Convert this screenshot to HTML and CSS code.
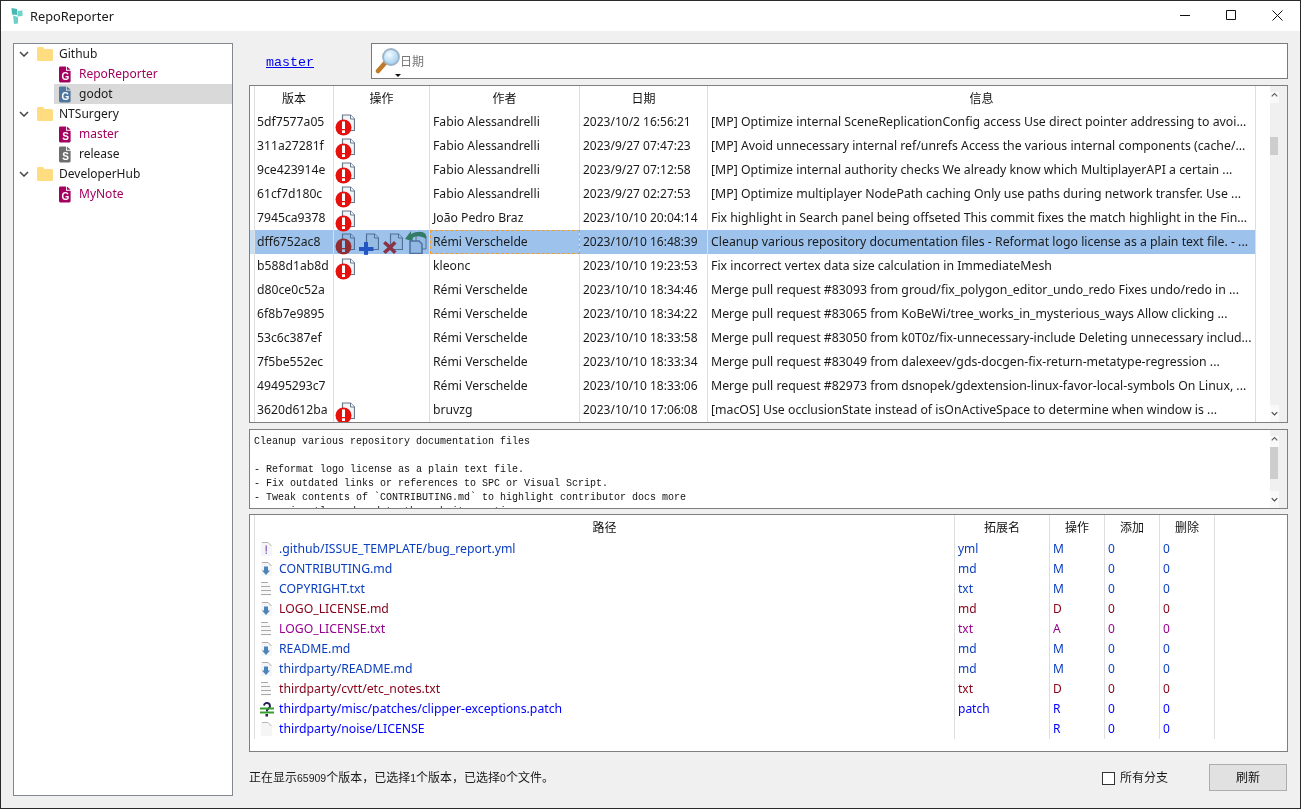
FILE: index.html
```html
<!DOCTYPE html>
<html lang="zh">
<head>
<meta charset="utf-8">
<title>RepoReporter</title>
<link rel="stylesheet" href="styles.css">
</head>
<body>
<svg class="defs" width="0" height="0" aria-hidden="true">
  <defs>
    <symbol id="doc" viewBox="0 0 20 22">
      <path d="M7.500 1h8l4 4v11.500h-12z" fill="#f4f4f4" stroke="#66798e" stroke-width="1.200"/>
      <path d="M15.500 1v4h4" fill="#fff" stroke="#66798e"/>
    </symbol>
    <symbol id="i-conflict" viewBox="0 0 20 22">
      <use href="#doc" width="20" height="22"/>
      <circle cx="8.500" cy="13.500" r="8" fill="#e8100c"/>
      <rect x="7" y="7.500" width="3" height="7.500" fill="#fff"/>
      <rect x="7" y="16.300" width="3" height="2.700" fill="#fff"/>
    </symbol>
    <symbol id="i-add" viewBox="0 0 20 22">
      <use href="#doc" width="20" height="22"/>
      <path d="M5 9h4v5h5.500v4H9v4H5v-4H0v-4h5z" fill="#0c50c8"/>
    </symbol>
    <symbol id="i-del" viewBox="0 0 20 22">
      <use href="#doc" width="20" height="22"/>
      <path d="M0 10.500l2.500-2.500L7 12l4-4 2.500 2.500L9.500 14.500l4 4-2.500 2.500L7 17l-4.500 4L0 18.500l4.500-4z" fill="#d81820"/>
    </symbol>
    <symbol id="i-revert" viewBox="0 0 22 24">
      <path d="M11 3h7l3 3v13h-10z" fill="#f4f4f4" stroke="#66798e"/>
      <path d="M5 11h9l3 3v9.500H5z" fill="#e8eef4" stroke="#5f7a96" stroke-width="1.500"/>
      <path d="M0 9l6-8v3c6-3 13-3 15 1v4c-4-3-9-3.500-13-1.500 0 0-.5 2-.5 3.500z" fill="#2c8a50"/>
    </symbol>
    <symbol id="repo" viewBox="0 0 14 17">
      <path d="M0 1.500A1.500 1.500 0 0 1 1.500 0H7.500V4.500H12.500V15.500A1.500 1.500 0 0 1 11 17H1.500A1.500 1.500 0 0 1 0 15.500z"/>
      <path d="M8.500 0L12.500 3.500H8.500z"/>
    </symbol>
    <symbol id="folder" viewBox="0 0 16 14">
      <path d="M0 1.500A1.500 1.500 0 0 1 1.500 0H6l1.500 2H14.500A1.500 1.500 0 0 1 16 3.500V12.500A1.500 1.500 0 0 1 14.500 14H1.500A1.500 1.500 0 0 1 0 12.500z" fill="#ffdc80"/>
    </symbol>
    <symbol id="chev-down" viewBox="0 0 10 6">
      <path d="M1 1l4 4 4-4" fill="none" stroke="#444" stroke-width="1.500"/>
    </symbol>
    <symbol id="chev-up" viewBox="0 0 10 6">
      <path d="M1 5l4-4 4 4" fill="none" stroke="#606060" stroke-width="1.700"/>
    </symbol>
    <symbol id="f-yml" viewBox="0 0 12 14">
      <path d="M1 0h7l4 4v10H1z" fill="#f3f5f8"/>
      <path d="M8 .5h-6M8 .5l3.500 3.500" stroke="#b5b5b5" fill="none"/>
      <rect x="5.500" y="3.500" width="1.500" height="6" fill="#9b72c0"/>
      <rect x="5.500" y="10.500" width="1.500" height="1.500" fill="#9b72c0"/>
    </symbol>
    <symbol id="f-md" viewBox="0 0 12 14">
      <path d="M1 0h7l4 4v10H1z" fill="#f3f5f8"/>
      <path d="M8 .5h-6M8 .5l3.500 3.500" stroke="#a8a8a8" fill="none"/>
      <path d="M4 4.500h4V8.500h2L6 13 2 8.500h2z" fill="#4d84b8"/>
    </symbol>
    <symbol id="f-txt" viewBox="0 0 12 14">
      <path d="M1 0h6.500l3.500 3.500V14H1z" fill="#f8f8f8"/>
      <path d="M1 .5h7M1 4.500h9M1 8.500h10M1 12.500h10" stroke="#a9a9a9"/>
    </symbol>
    <symbol id="f-patch" viewBox="0 0 14 16">
      <path d="M4 4.500a3 3 0 1 1 4.500 3l-1.500 1.500v1.500" fill="none" stroke="#232352" stroke-width="2"/>
      <rect x="0" y="6.500" width="14" height="2" fill="#35a030"/>
      <rect x="0" y="10.500" width="14" height="2" fill="#35a030"/>
      <rect x="5.500" y="13" width="2.500" height="2.500" fill="#232352"/>
    </symbol>
    <symbol id="f-blank" viewBox="0 0 12 14">
      <path d="M1 0h7l4 4v10H1z" fill="#f5f5f5"/>
      <path d="M8 .5h-6M8 .5l3.500 3.500" stroke="#b8b8b8" fill="none"/>
    </symbol>
  </defs>
</svg>

<div class="window">
  <header class="titlebar">
    <svg class="logo" viewBox="0 0 12 16" width="12" height="16"><path d="M.5 0L6 1v6L1 6.500z" fill="#47b8b2"/><path d="M6.500 3l5 -.5V8L6.500 8.500z" fill="#6fd4ca"/><path d="M2 7.500l5 1.500v6.500L3 16z" fill="#6cd2c8"/></svg>
    <span class="title">RepoReporter</span>
    <div class="winbtns">
      <button class="winbtn" aria-label="最小化"><svg width="10" height="10" viewBox="0 0 10 10"><path d="M0 5.500h10" stroke="#111"/></svg></button>
      <button class="winbtn" aria-label="最大化"><svg width="10" height="10" viewBox="0 0 10 10"><path d="M.5.500h9v9h-9z" fill="none" stroke="#111"/></svg></button>
      <button class="winbtn" aria-label="关闭"><svg width="11" height="11" viewBox="0 0 11 11"><path d="M.5.500l10 10M10.500.500l-10 10" stroke="#111"/></svg></button>
    </div>
  </header>

  <main class="content">
    <nav class="tree">
      <div class="node"><svg class="chev"><use href="#chev-down"/></svg><svg class="folder"><use href="#folder"/></svg><span>Github</span></div>
      <div class="node child"><span class="ricon c-red"><svg><use href="#repo"/></svg><b>G</b></span><span class="c-red">RepoReporter</span></div>
      <div class="node child active"><span class="ricon c-blue"><svg><use href="#repo"/></svg><b>G</b></span><span>godot</span></div>
      <div class="node"><svg class="chev"><use href="#chev-down"/></svg><svg class="folder"><use href="#folder"/></svg><span>NTSurgery</span></div>
      <div class="node child"><span class="ricon c-red"><svg><use href="#repo"/></svg><b>S</b></span><span class="c-red">master</span></div>
      <div class="node child"><span class="ricon c-gray"><svg><use href="#repo"/></svg><b>S</b></span><span>release</span></div>
      <div class="node"><svg class="chev"><use href="#chev-down"/></svg><svg class="folder"><use href="#folder"/></svg><span>DeveloperHub</span></div>
      <div class="node child"><span class="ricon c-red"><svg><use href="#repo"/></svg><b>G</b></span><span class="c-red">MyNote</span></div>
    </nav>

    <section class="right">
      <div class="toolbar">
        <a class="branch" href="#">master</a>
        <div class="search">
          <svg class="lens" width="26" height="30" viewBox="0 0 26 30">
            <defs><radialGradient id="glass" cx=".4" cy=".35" r=".8"><stop offset="0" stop-color="#f2fbff"/><stop offset="1" stop-color="#8fc4ec"/></radialGradient></defs>
            <path d="M10 15L3 23" stroke="#c07a28" stroke-width="4.500" stroke-linecap="round"/>
            <circle cx="16" cy="9" r="8" fill="url(#glass)" stroke="#9db4c8" stroke-width="1.800"/>
            <path d="M20 26h6l-3 3z" fill="#111"/>
          </svg>
          <span class="placeholder">日期</span>
        </div>
      </div>

      <div class="panel commits">
        <table class="grid">
          <colgroup><col class="w-lead"><col class="w-hash"><col class="w-ops"><col class="w-author"><col class="w-date"><col class="w-msg"></colgroup>
          <thead><tr><th></th><th>版本</th><th>操作</th><th>作者</th><th>日期</th><th>信息</th></tr></thead>
          <tbody>
            <tr><td></td><td>5df7577a05</td><td class="ops"><svg><use href="#i-conflict"/></svg></td><td>Fabio Alessandrelli</td><td>2023/10/2 16:56:21</td><td>[MP] Optimize internal SceneReplicationConfig access Use direct pointer addressing to avoi...</td></tr>
            <tr><td></td><td>311a27281f</td><td class="ops"><svg><use href="#i-conflict"/></svg></td><td>Fabio Alessandrelli</td><td>2023/9/27 07:47:23</td><td>[MP] Avoid unnecessary internal ref/unrefs Access the various internal components (cache/...</td></tr>
            <tr><td></td><td>9ce423914e</td><td class="ops"><svg><use href="#i-conflict"/></svg></td><td>Fabio Alessandrelli</td><td>2023/9/27 07:12:58</td><td>[MP] Optimize internal authority checks We already know which MultiplayerAPI a certain ...</td></tr>
            <tr><td></td><td>61cf7d180c</td><td class="ops"><svg><use href="#i-conflict"/></svg></td><td>Fabio Alessandrelli</td><td>2023/9/27 02:27:53</td><td>[MP] Optimize multiplayer NodePath caching Only use paths during network transfer. Use ...</td></tr>
            <tr><td></td><td>7945ca9378</td><td class="ops"><svg><use href="#i-conflict"/></svg></td><td>João Pedro Braz</td><td>2023/10/10 20:04:14</td><td>Fix highlight in Search panel being offseted This commit fixes the match highlight in the Fin...</td></tr>
            <tr class="selected"><td></td><td>dff6752ac8</td><td class="ops"><svg><use href="#i-conflict"/></svg><svg><use href="#i-add"/></svg><svg><use href="#i-del"/></svg><svg class="revert"><use href="#i-revert"/></svg></td><td class="focus">Rémi Verschelde</td><td>2023/10/10 16:48:39</td><td>Cleanup various repository documentation files - Reformat logo license as a plain text file. - ...</td></tr>
            <tr><td></td><td>b588d1ab8d</td><td class="ops"><svg><use href="#i-conflict"/></svg></td><td>kleonc</td><td>2023/10/10 19:23:53</td><td>Fix incorrect vertex data size calculation in ImmediateMesh</td></tr>
            <tr><td></td><td>d80ce0c52a</td><td class="ops"></td><td>Rémi Verschelde</td><td>2023/10/10 18:34:46</td><td>Merge pull request #83093 from groud/fix_polygon_editor_undo_redo Fixes undo/redo in ...</td></tr>
            <tr><td></td><td>6f8b7e9895</td><td class="ops"></td><td>Rémi Verschelde</td><td>2023/10/10 18:34:22</td><td>Merge pull request #83065 from KoBeWi/tree_works_in_mysterious_ways Allow clicking ...</td></tr>
            <tr><td></td><td>53c6c387ef</td><td class="ops"></td><td>Rémi Verschelde</td><td>2023/10/10 18:33:58</td><td>Merge pull request #83050 from k0T0z/fix-unnecessary-include Deleting unnecessary includ...</td></tr>
            <tr><td></td><td>7f5be552ec</td><td class="ops"></td><td>Rémi Verschelde</td><td>2023/10/10 18:33:34</td><td>Merge pull request #83049 from dalexeev/gds-docgen-fix-return-metatype-regression ...</td></tr>
            <tr><td></td><td>49495293c7</td><td class="ops"></td><td>Rémi Verschelde</td><td>2023/10/10 18:33:06</td><td>Merge pull request #82973 from dsnopek/gdextension-linux-favor-local-symbols On Linux, ...</td></tr>
            <tr><td></td><td>3620d612ba</td><td class="ops"><svg><use href="#i-conflict"/></svg></td><td>bruvzg</td><td>2023/10/10 17:06:08</td><td>[macOS] Use occlusionState instead of isOnActiveSpace to determine when window is ...</td></tr>
          </tbody>
        </table>
        <div class="scrollbar">
          <div class="sb-col"><svg class="sb-up"><use href="#chev-up"/></svg><div class="sb-track"><div class="thumb t1"></div></div><svg class="sb-down"><use href="#chev-down"/></svg></div>
        </div>
      </div>

      <div class="panel detail">
        <pre class="message">Cleanup various repository documentation files

- Reformat logo license as a plain text file.
- Fix outdated links or references to SPC or Visual Script.
- Tweak contents of `CONTRIBUTING.md` to highlight contributor docs more
  prominently and update the website mentions.</pre>
        <div class="scrollbar">
          <div class="sb-col"><svg class="sb-up"><use href="#chev-up"/></svg><div class="sb-track"><div class="thumb t2"></div></div><svg class="sb-down"><use href="#chev-down"/></svg></div>
        </div>
      </div>

      <div class="panel files">
        <table class="grid file-grid">
          <colgroup><col class="w-lead"><col class="w-path"><col class="w-ext"><col class="w-num"><col class="w-num"><col class="w-num"></colgroup>
          <thead><tr><th></th><th>路径</th><th>拓展名</th><th>操作</th><th>添加</th><th>删除</th></tr></thead>
          <tbody>
            <tr class="mod"><td></td><td class="path"><svg><use href="#f-yml"/></svg>.github/ISSUE_TEMPLATE/bug_report.yml</td><td>yml</td><td>M</td><td>0</td><td>0</td></tr>
            <tr class="mod"><td></td><td class="path"><svg><use href="#f-md"/></svg>CONTRIBUTING.md</td><td>md</td><td>M</td><td>0</td><td>0</td></tr>
            <tr class="mod"><td></td><td class="path"><svg><use href="#f-txt"/></svg>COPYRIGHT.txt</td><td>txt</td><td>M</td><td>0</td><td>0</td></tr>
            <tr class="del"><td></td><td class="path"><svg><use href="#f-md"/></svg>LOGO_LICENSE.md</td><td>md</td><td>D</td><td>0</td><td>0</td></tr>
            <tr class="add"><td></td><td class="path"><svg><use href="#f-txt"/></svg>LOGO_LICENSE.txt</td><td>txt</td><td>A</td><td>0</td><td>0</td></tr>
            <tr class="mod"><td></td><td class="path"><svg><use href="#f-md"/></svg>README.md</td><td>md</td><td>M</td><td>0</td><td>0</td></tr>
            <tr class="mod"><td></td><td class="path"><svg><use href="#f-md"/></svg>thirdparty/README.md</td><td>md</td><td>M</td><td>0</td><td>0</td></tr>
            <tr class="del"><td></td><td class="path"><svg><use href="#f-txt"/></svg>thirdparty/cvtt/etc_notes.txt</td><td>txt</td><td>D</td><td>0</td><td>0</td></tr>
            <tr class="ren"><td></td><td class="path"><svg class="patch"><use href="#f-patch"/></svg>thirdparty/misc/patches/clipper-exceptions.patch</td><td>patch</td><td>R</td><td>0</td><td>0</td></tr>
            <tr class="ren"><td></td><td class="path"><svg><use href="#f-blank"/></svg>thirdparty/noise/LICENSE</td><td></td><td>R</td><td>0</td><td>0</td></tr>
          </tbody>
        </table>
      </div>

      <footer class="statusbar">
        <span class="status">正在显示<span class="num">65909</span>个版本，已选择<span class="num">1</span>个版本，已选择<span class="num">0</span>个文件。</span>
        <label class="check"><span class="box"></span>所有分支</label>
        <button class="refresh">刷新</button>
      </footer>
    </section>
  </main>
</div>
</body>
</html>
```

FILE: styles.css
```css
* { box-sizing: border-box; }
html, body { margin: 0; height: 100%; }
body {
  font: 12px/16px "Noto Sans", "Noto Sans CJK SC", sans-serif;
  color: #1a1a1a;
  background: #f0f0f0;
}
.defs { position: absolute; }

.window {
  width: 1301px;
  height: 809px;
  border: 1px solid #2a2a2a;
  display: flex;
  flex-direction: column;
  background: #f0f0f0;
}
.titlebar {
  height: 30px;
  flex: none;
  background: #fff;
  display: flex;
  align-items: center;
  padding-left: 10px;
}
.logo { flex: none; }
.title { margin-left: 7px; font-size: 12.8px; }
.winbtns { margin-left: auto; display: flex; align-self: flex-start; }
.winbtn {
  width: 46px;
  height: 28px;
  border: 0;
  padding: 0;
  background: none;
  display: flex;
  align-items: center;
  justify-content: center;
}

.content {
  flex: 1;
  min-height: 0;
  display: flex;
  gap: 16px;
  padding: 12px;
}
.tree {
  width: 220px;
  flex: none;
  background: #fff;
  border: 1px solid #828790;
}
.node {
  height: 20px;
  display: flex;
  align-items: center;
  padding-left: 5px;
}
.chev { width: 10px; height: 6px; flex: none; }
.folder { width: 16px; height: 14px; margin-left: 8px; margin-right: 6px; flex: none; }
.child { margin-left: 40px; padding-left: 5px; }
.active { background: #d9d9d9; }
.ricon {
  position: relative;
  width: 13px;
  height: 17px;
  margin-right: 7px;
  flex: none;
  display: block;
}
.ricon svg { width: 13px; height: 17px; fill: currentColor; display: block; }
.ricon b {
  position: absolute;
  left: 0;
  right: 0;
  bottom: 0;
  text-align: center;
  color: #fff;
  font: bold 10px/12px "Liberation Sans", sans-serif;
}
.c-red { color: #a3005f; }
.c-blue { color: #4f769e; }
.c-gray { color: #6e6e6e; }

.right {
  flex: 1;
  min-width: 0;
  display: flex;
  flex-direction: column;
}
.toolbar { height: 36px; flex: none; display: flex; align-items: center; }
.branch {
  width: 122px;
  padding: 3px 0 0 17px;
  flex: none;
  font: 13.33px/16px "Liberation Mono", monospace;
  color: #0000ee;
}
.search {
  flex: 1;
  height: 36px;
  background: #fff;
  border: 1px solid #7a7a7a;
  display: flex;
  align-items: center;
  padding-left: 3px;
}
.lens { flex: none; margin-top: 3px; }
.placeholder { color: #767676; margin: 2px 0 0 -1px; }

.panel {
  background: #fff;
  border: 1px solid #7f7f7f;
  display: flex;
  flex: none;
  overflow: hidden;
}
.commits { height: 338px; margin-top: 6px; }
.detail { height: 80px; margin-top: 6px; }
.files { height: 238px; margin-top: 5px; align-items: flex-start; }

.grid {
  table-layout: fixed;
  border-collapse: separate;
  border-spacing: 0;
  width: 1006px;
  flex: none;
}
.file-grid { width: 965px; }
.w-lead { width: 5px; }
.w-hash { width: 79px; }
.w-ops { width: 96px; }
.w-author { width: 150px; }
.w-date { width: 128px; }
.w-msg { width: 548px; }
.w-path { width: 700px; }
.w-ext { width: 95px; }
.w-num { width: 55px; }

.grid th {
  height: 24px;
  padding: 2px 0 0;
  font-weight: 400;
  color: #111;
  border-right: 1px solid #dedede;
  text-align: center;
}
.grid td {
  height: 24px;
  padding: 0 0 0 3px;
  border-right: 1px solid #dedede;
  white-space: nowrap;
  overflow: hidden;
}
.grid td:first-child { padding: 0; }
.commits td:nth-child(2) { padding-left: 2px; font-size: 12.2px; }
.commits td:nth-child(4) { font-size: 12.2px; }
.commits td:nth-child(6) { font-size: 12.3px; }
.grid td.ops { overflow: visible; padding-left: 1px; line-height: 0; }
.ops svg {
  width: 20px;
  height: 22px;
  margin: 3px 4px -3px 0;
  display: inline-block;
  vertical-align: top;
  overflow: visible;
}
.ops svg.revert { width: 22px; height: 24px; margin: 0 0 0 -2px; }

.selected td { background: #9dc3ec; }
.selected td:first-child { background: #c5ddf5; }
.selected .ops svg { mix-blend-mode: multiply; opacity: .82; }
.selected td.focus { outline: 1px dashed #f09a30; outline-offset: -1px; }

.file-grid td { height: 20px; color: inherit; }
.file-grid td.path { font-size: 12.25px; }
.path svg {
  width: 12px;
  height: 14px;
  margin: 0 7px 0 2px;
  vertical-align: -3px;
}
.path svg.patch { width: 14px; height: 16px; margin: 0 5px 0 2px; vertical-align: -4px; }
.mod { color: #0a3ec0; }
.del { color: #850018; }
.add { color: #990090; }
.ren { color: #0000ff; }

.scrollbar {
  margin-left: auto;
  width: 17px;
  flex: none;
  background: #f0f0f0;
  display: flex;
}
.sb-col {
  width: 9px;
  height: 100%;
  display: flex;
  flex-direction: column;
  align-items: stretch;
}
.sb-up, .sb-down { flex: none; width: 9px; background: #f9f9f9; }
.sb-up { height: 11px; margin-top: 6px; padding: 0 1px 5px; }
.sb-down { height: 17px; padding: 6px 1px; }
.sb-track { flex: 1; position: relative; }
.thumb { background: #cdcdcd; width: 8px; position: relative; }
.t1 { height: 18px; top: 34px; }
.t2 { height: 32px; top: 0; }

.message {
  margin: 0;
  flex: 1;
  padding: 5px 4px 0;
  font: 10px/14px "Liberation Mono", monospace;
  color: #111;
  overflow: hidden;
}

.statusbar {
  flex: 1;
  display: flex;
  align-items: center;
  padding-top: 6px;
}
.status { flex: 1; margin-top: 2px; }
.num { font: 10.5px "Liberation Sans", sans-serif; }
.check { display: flex; align-items: center; gap: 5px; width: 107px; flex: none; margin-top: 2px; }
.box {
  width: 13px;
  height: 13px;
  background: #fff;
  border: 1px solid #333;
  flex: none;
}
.refresh {
  width: 78px;
  height: 27px;
  flex: none;
  margin-right: 1px;
  background: #e1e1e1;
  border: 1px solid #adadad;
  font: inherit;
  color: #111;
  padding: 1px 0 0;
}
```
